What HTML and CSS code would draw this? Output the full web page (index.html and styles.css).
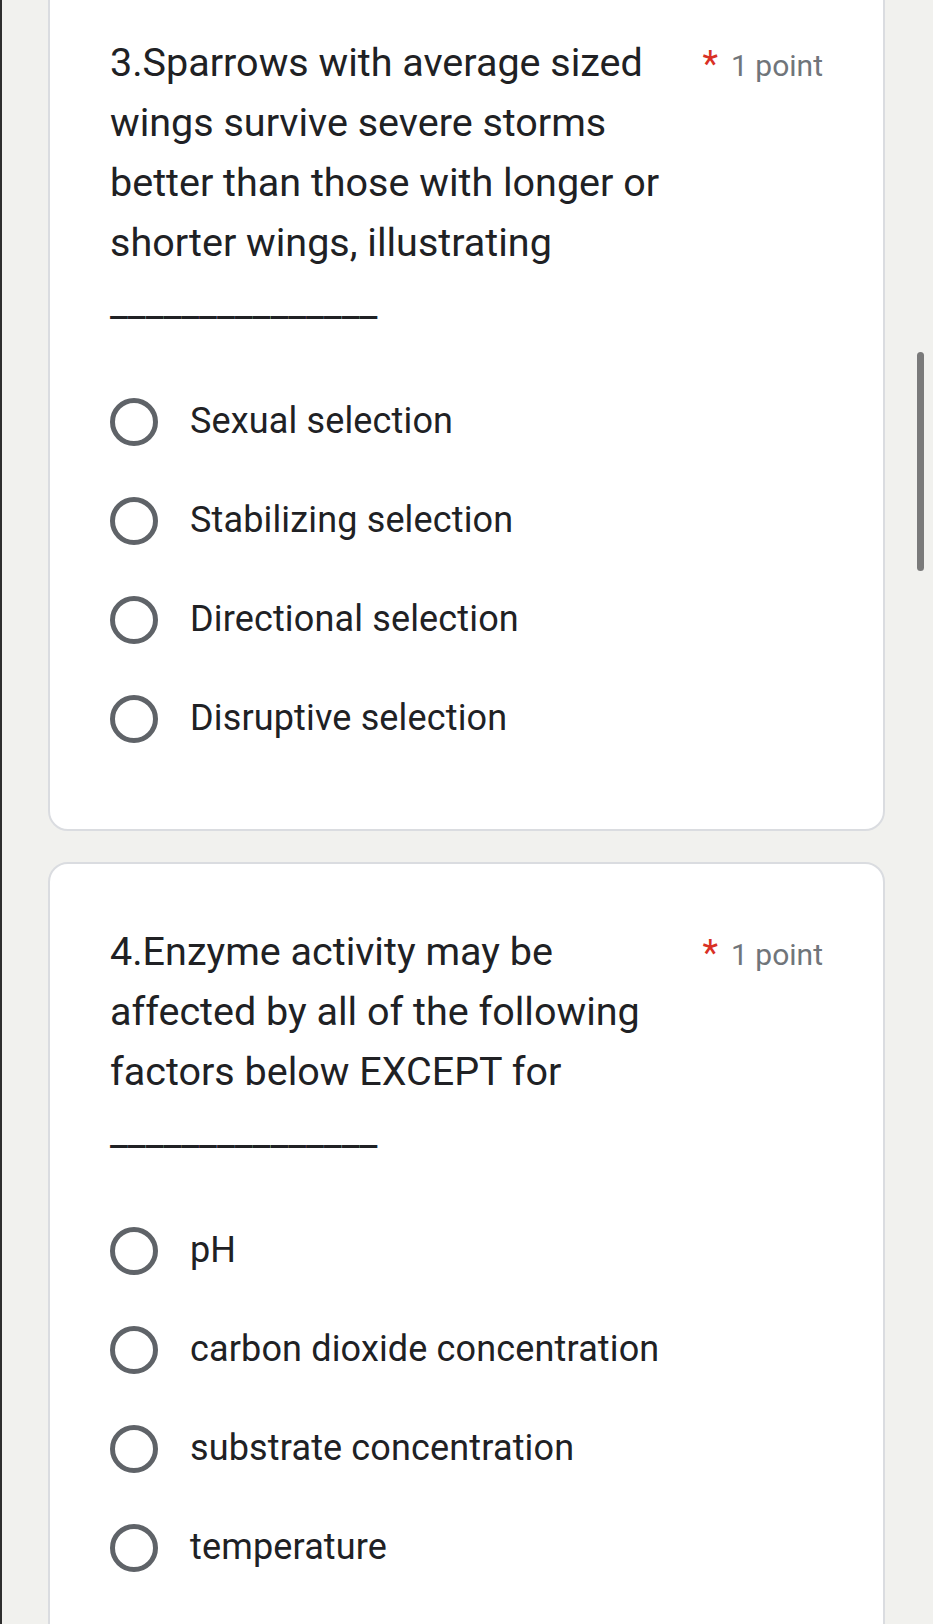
FILE: index.html
```html
<!DOCTYPE html>
<html lang="en">
<head>
<meta charset="utf-8">
<title>Quiz</title>
<link rel="stylesheet" href="styles.css">
</head>
<body>
<div class="screen">
  <main class="form">
    <section class="card">
      <div class="q-head">
        <div class="q-title">3.Sparrows with average sized wings survive severe storms better than those with longer or shorter wings, illustrating _______________</div>
        <div class="q-points"><span class="req">*</span>1 point</div>
      </div>
      <div class="options">
        <label class="opt"><span class="radio"></span><span class="opt-text">Sexual selection</span></label>
        <label class="opt"><span class="radio"></span><span class="opt-text">Stabilizing selection</span></label>
        <label class="opt"><span class="radio"></span><span class="opt-text">Directional selection</span></label>
        <label class="opt"><span class="radio"></span><span class="opt-text">Disruptive selection</span></label>
      </div>
    </section>
    <section class="card">
      <div class="q-head">
        <div class="q-title">4.Enzyme activity may be affected by all of the following factors below EXCEPT for _______________</div>
        <div class="q-points"><span class="req">*</span>1 point</div>
      </div>
      <div class="options">
        <label class="opt"><span class="radio"></span><span class="opt-text">pH</span></label>
        <label class="opt"><span class="radio"></span><span class="opt-text">carbon dioxide concentration</span></label>
        <label class="opt"><span class="radio"></span><span class="opt-text">substrate concentration</span></label>
        <label class="opt"><span class="radio"></span><span class="opt-text">temperature</span></label>
      </div>
    </section>
  </main>
  <div class="scroll-thumb"></div>
</div>
</body>
</html>
```
FILE: styles.css
```css
html, body {
  margin: 0;
  padding: 0;
  height: 100%;
  overflow: hidden;
}
body {
  background: #f1f1ee;
  font-family: Roboto, "Noto Sans", "Liberation Sans", sans-serif;
  color: #202124;
}
.screen {
  position: relative;
  height: 1624px;
  border-left: 2px solid #2e2e2e;
  overflow: hidden;
}
.form {
  margin-top: -27px;
  padding: 0 48px 0 46px;
  display: flex;
  flex-direction: column;
  gap: 31px;
}
.card {
  background: #ffffff;
  border: 2px solid #dadce0;
  border-radius: 20px;
  padding: 58px 60px 61px 60px;
}
.q-head {
  display: flex;
  align-items: baseline;
  gap: 10px;
}
.q-title {
  flex: 1 1 auto;
  font-size: 39.5px;
  line-height: 60px;
  color: #202124;
}
.q-points {
  flex: none;
  font-size: 30px;
  line-height: 60px;
  color: #70757a;
  white-space: nowrap;
}
.req {
  color: #d93025;
  font-size: 36px;
  margin-right: 13px;
}
.options {
  margin-top: 39px;
  display: flex;
  flex-direction: column;
}
.opt {
  display: flex;
  align-items: center;
  gap: 32px;
  height: 99px;
}
.radio {
  flex: none;
  width: 48px;
  height: 48px;
  box-sizing: border-box;
  border: 5px solid #5f6368;
  border-radius: 50%;
}
.opt-text {
  font-size: 36px;
  letter-spacing: 0.15px;
  line-height: 1.2;
  color: #202124;
}
.scroll-thumb {
  position: absolute;
  top: 352px;
  right: 9px;
  width: 7px;
  height: 219px;
  border-radius: 4px;
  background: #7a7a7a;
}
```
